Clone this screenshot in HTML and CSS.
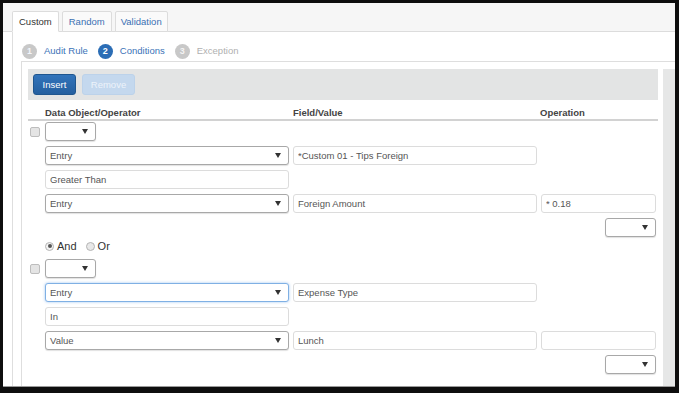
FILE: index.html
```html
<!DOCTYPE html>
<html lang="en">
<head>
    <meta charset="UTF-8">
    <meta name="viewport" content="width=device-width, initial-scale=1.0">
    <title>Audit Rule Conditions</title>
    <link rel="stylesheet" href="styles.css">
</head>
<body>
    <div class="window">
        <div class="tab-bar">
            <div class="tab active">Custom</div>
            <div class="tab">Random</div>
            <div class="tab">Validation</div>
        </div>
        <div class="pane">
            <div class="steps">
                <div class="step done"><span class="num">1</span>Audit Rule</div>
                <div class="step current"><span class="num">2</span>Conditions</div>
                <div class="step todo"><span class="num">3</span>Exception</div>
            </div>
            <div class="box">
                <div class="main">
                    <div class="toolbar">
                        <button type="button" class="btn btn-insert">Insert</button>
                        <button type="button" class="btn btn-remove">Remove</button>
                    </div>
                    <div class="col-heads">
                        <span class="head w-lg">Data Object/Operator</span>
                        <span class="head w-lg">Field/Value</span>
                        <span class="head w-sm">Operation</span>
                    </div>

                    <!-- condition 1 -->
                    <div class="condition">
                        <div class="row first">
                            <span class="checkbox"></span>
                            <div class="select w-xs"></div>
                        </div>
                        <div class="row">
                            <div class="select w-lg">Entry</div>
                            <input type="text" class="field w-lg" value="*Custom 01 - Tips Foreign">
                        </div>
                        <div class="row">
                            <input type="text" class="field w-lg" value="Greater Than">
                        </div>
                        <div class="row">
                            <div class="select w-lg">Entry</div>
                            <input type="text" class="field w-lg" value="Foreign Amount">
                            <input type="text" class="field w-sm" value="* 0.18">
                        </div>
                        <div class="row end">
                            <div class="select w-xs"></div>
                        </div>
                    </div>

                    <div class="join">
                        <label class="radio-label"><span class="radio checked"></span>And</label>
                        <label class="radio-label"><span class="radio"></span>Or</label>
                    </div>

                    <!-- condition 2 -->
                    <div class="condition">
                        <div class="row first">
                            <span class="checkbox"></span>
                            <div class="select w-xs"></div>
                        </div>
                        <div class="row">
                            <div class="select w-lg focused">Entry</div>
                            <input type="text" class="field w-lg" value="Expense Type">
                        </div>
                        <div class="row">
                            <input type="text" class="field w-lg" value="In">
                        </div>
                        <div class="row">
                            <div class="select w-lg">Value</div>
                            <input type="text" class="field w-lg" value="Lunch">
                            <input type="text" class="field w-sm" value="">
                        </div>
                        <div class="row end">
                            <div class="select w-xs"></div>
                        </div>
                    </div>
                </div>
                <div class="scroll"></div>
            </div>
        </div>
    </div>
</body>
</html>
```

FILE: styles.css
```css
/* Reset */
* {
    margin: 0;
    padding: 0;
    box-sizing: border-box;
}

body {
    background-color: #0e0e0e;
    font-family: "Liberation Sans", Arial, sans-serif;
    font-size: 9.5px;
    color: #444444;
    padding: 3px 0 0 3px;
}

/* Window */
.window {
    width: 672px;
    height: 384px;
    background-color: #ffffff;
    border-bottom: 1px solid #9a9a9a;
    display: flex;
    flex-direction: column;
    overflow: hidden;
}

/* Tabs */
.tab-bar {
    height: 29px;
    padding: 8px 0 0 9px;
    background-color: #f6f6f6;
    border-bottom: 1px solid #dcdcdc;
    display: flex;
    align-items: flex-end;
    gap: 3px;
}

.tab {
    height: 21px;
    margin-bottom: -1px;
    padding: 0 6px;
    line-height: 20px;
    border: 1px solid #dcdcdc;
    border-radius: 2px 2px 0 0;
    background-color: #fafafa;
    color: #3b70b3;
}

.tab.active {
    background-color: #ffffff;
    border-bottom-color: #ffffff;
    color: #333333;
}

.tab:last-child {
    padding: 0 5px;
}

/* Tab content */
.pane {
    flex: 1;
    margin-left: 9px;
    padding-left: 8px;
    border-left: 1px solid #dedede;
    display: flex;
    flex-direction: column;
}

.steps {
    height: 29px;
    padding: 12px 0 0 1px;
    display: flex;
    gap: 10px;
}

.step {
    display: flex;
    align-items: flex-start;
    height: 15px;
    line-height: 14px;
    color: #3b72b7;
}

.step .num {
    width: 15px;
    height: 15px;
    margin-right: 7px;
    border-radius: 50%;
    background-color: #c8c8c8;
    color: #f2f5fa;
    font-weight: bold;
    font-size: 9px;
    line-height: 15px;
    text-align: center;
}

.step.current .num {
    background-color: #2b6db5;
    color: #ffffff;
}

.step.todo {
    color: #b0b0b0;
}

.step.todo .num {
    color: #f4f4f4;
}

/* Conditions box */
.box {
    flex: 1;
    padding: 7px 0 0 6px;
    border-top: 1px solid #dedede;
    border-left: 1px solid #dedede;
    display: flex;
}

.main {
    width: 630px;
}

.scroll {
    width: 12px;
    margin-left: 5px;
    background-color: #e6e7e7;
}

.toolbar {
    height: 31px;
    padding: 5px 0 0 5px;
    background-color: #e3e4e4;
    display: flex;
    gap: 6px;
}

.btn {
    height: 21px;
    border-radius: 3px;
    font-family: inherit;
    font-size: 9.5px;
    color: #ffffff;
}

.btn-insert {
    width: 43px;
    background: linear-gradient(#3274bb, #245f9f);
    border: 1px solid #1f568f;
}

.btn-remove {
    width: 53px;
    background-color: #c4d8ee;
    border: 1px solid #bcd2ea;
    color: #edf3fa;
}

/* Column headings */
.col-heads {
    height: 21px;
    padding: 7px 0 0 17px;
    border-bottom: 2px solid #d2d2d2;
    display: flex;
    gap: 3px;
}

.head {
    font-weight: bold;
    color: #444444;
    line-height: 11px;
}

.head.w-lg + .head.w-lg {
    margin-left: 1px;
}

/* Rows of controls */
.condition {
    padding-top: 1px;
}

.row {
    display: flex;
    gap: 4px;
    margin-top: 5px;
    padding-left: 17px;
}

.row.first {
    margin-top: 0;
    padding-left: 2px;
    align-items: center;
}

.row.end {
    justify-content: flex-end;
    padding-right: 2px;
}

.w-lg { width: 244px; }
.w-sm { width: 115px; }
.w-xs { width: 51px; }

.checkbox {
    width: 10px;
    height: 10px;
    margin-right: 1px;
    border: 1px solid #bdbdbd;
    border-radius: 2px;
    background-color: #e4e4e4;
}

.select,
.field {
    height: 19px;
    padding: 0 4px;
    border-radius: 3px;
    font-family: inherit;
    font-size: 9.5px;
    line-height: 17px;
    color: #555555;
    background-color: #ffffff;
}

.select {
    position: relative;
    border: 1px solid #a8a8a8;
    box-shadow: 0 1px 1px rgba(0, 0, 0, 0.12);
}

/* caret */
.select::after {
    content: "";
    position: absolute;
    right: 7px;
    top: 6px;
    border-left: 3px solid transparent;
    border-right: 3px solid transparent;
    border-top: 5px solid #333333;
}

.select.focused {
    border-color: #7fb0e4;
    box-shadow: 0 0 3px rgba(82, 150, 228, 0.55);
}

.field {
    border: 1px solid #dcdcdc;
    outline: none;
}

/* And / Or */
.join {
    height: 12px;
    margin: 3px 0 6px;
    padding-left: 17px;
    display: flex;
    align-items: center;
    gap: 9px;
    font-size: 11px;
    color: #333333;
}

.radio-label {
    display: flex;
    align-items: center;
    gap: 3px;
}

.radio {
    position: relative;
    width: 9px;
    height: 9px;
    border: 1px solid #b4b4b4;
    border-radius: 50%;
    background-color: #e8e8e8;
}

.radio.checked {
    background-color: #f4f4f4;
}

.radio.checked::after {
    content: "";
    position: absolute;
    left: 1.5px;
    top: 1.5px;
    width: 4px;
    height: 4px;
    border-radius: 50%;
    background-color: #555555;
}
```
